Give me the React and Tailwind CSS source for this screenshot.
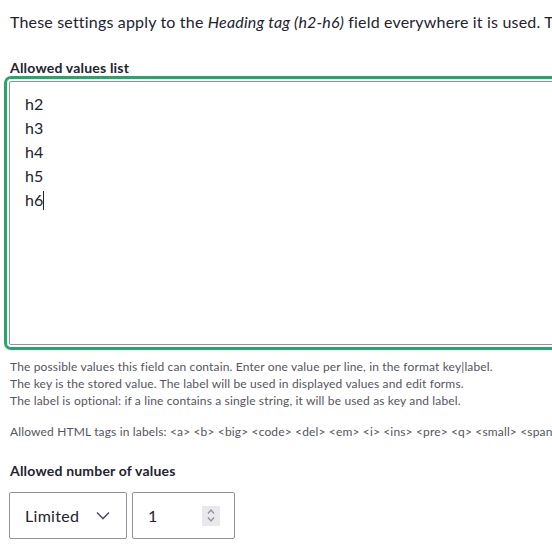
export default function App() {
  const values = ["h2", "h3", "h4", "h5", "h6"];

  return (
    <div
      className="w-[552px] h-[557px] overflow-hidden bg-white text-[#222330]"
      style={{ fontFamily: "Lato, 'Liberation Sans', sans-serif" }}
    >
      <div className="w-[620px] pl-[10px]">
        <p className="pt-[12px] text-[16px] leading-[20px] tracking-[0.18px] whitespace-nowrap">
          These settings apply to the <em>Heading tag (h2-h6)</em> field everywhere it is used. The
        </p>

        {/* Allowed values list */}
        <div className="mt-[27px]">
          <label className="block text-[14px] leading-[18px] font-bold tracking-[0.2px]">Allowed values list</label>
          <div className="mt-[4px] -ml-[1px]">
            <div className="h-[264px] rounded-[2px] border border-[#8e929c] outline-[3px] outline-solid outline-[#26a769] outline-offset-[2px] pl-[15px] pt-[10px] text-[16px] leading-[24px]">
              {values.map((v, i) => (
                <div key={v}>
                  {v}
                  {i === values.length - 1 && (
                    <span className="inline-block w-px h-[19px] bg-[#222330] align-[-4px]" />
                  )}
                </div>
              ))}
            </div>
          </div>
          <div className="mt-[13px] text-[12px] leading-[17px] tracking-[0.15px] text-[#545560]">
            <p>The possible values this field can contain. Enter one value per line, in the format key|label.</p>
            <p>The key is the stored value. The label will be used in displayed values and edit forms.</p>
            <p>The label is optional: if a line contains a single string, it will be used as key and label.</p>
            <p className="mt-[14px] whitespace-nowrap">
              Allowed HTML tags in labels: &lt;a&gt; &lt;b&gt; &lt;big&gt; &lt;code&gt; &lt;del&gt; &lt;em&gt; &lt;i&gt; &lt;ins&gt; &lt;pre&gt; &lt;q&gt; &lt;small&gt; &lt;span&gt; &lt;strong&gt;
            </p>
          </div>
        </div>

        {/* Allowed number of values */}
        <div className="mt-[22px]">
          <label className="block text-[14px] leading-[18px] font-bold tracking-[0.2px]">Allowed number of values</label>
          <div className="mt-[12px] flex gap-[5px] -ml-[1px]">
            <div className="w-[118px] h-[47px] rounded-[2px] border border-[#8e929c] flex items-center justify-between pl-[15px] pr-[16px] text-[16px] tracking-[0.3px]">
              <span>Limited</span>
              <svg width="14" height="9" viewBox="0 0 14 9" fill="none" stroke="#545560" strokeWidth="1.6">
                <path d="M1 1.5l6 6 6-6" />
              </svg>
            </div>
            <div className="w-[103px] h-[47px] rounded-[2px] border border-[#8e929c] flex items-center justify-between pl-[15px] pr-[14px] text-[16px]">
              <span>1</span>
              <div className="w-[18px] h-[20px] bg-[#e8e8ee] flex flex-col items-center justify-center gap-[3px]">
                <svg width="8" height="5" viewBox="0 0 8 5" fill="none" stroke="#8e929c" strokeWidth="1.2">
                  <path d="M1 4.5l3-3.5 3 3.5" />
                </svg>
                <svg width="8" height="5" viewBox="0 0 8 5" fill="none" stroke="#8e929c" strokeWidth="1.2">
                  <path d="M1 0.5l3 3.5 3-3.5" />
                </svg>
              </div>
            </div>
          </div>
        </div>
      </div>
    </div>
  );
}
